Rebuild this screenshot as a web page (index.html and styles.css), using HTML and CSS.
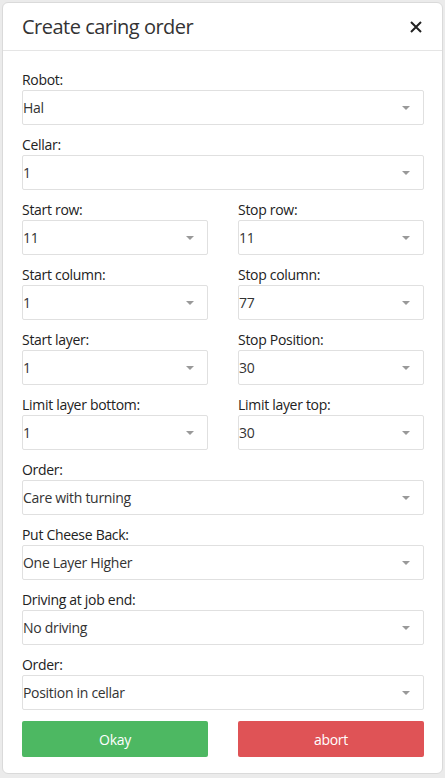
FILE: index.html
```html
<!DOCTYPE html>
<html>
<head>
<meta charset="utf-8">
<link rel="stylesheet" href="styles.css">
</head>
<body>
<div class="modal">
  <div class="modal-header">
    <h4 class="title">Create caring order</h4>
    <span class="close" aria-label="close">
      <svg width="12" height="12" viewBox="0 0 12 12"><path d="M1 1L11 11M11 1L1 11" stroke="#222" stroke-width="2" stroke-linecap="butt"/></svg>
    </span>
  </div>
  <div class="modal-body">
    <div class="group">
      <label>Robot:</label>
      <div class="select"><span>Hal</span><i class="caret"></i></div>
    </div>
    <div class="group">
      <label>Cellar:</label>
      <div class="select"><span>1</span><i class="caret"></i></div>
    </div>
    <div class="row">
      <div class="group">
        <label>Start row:</label>
        <div class="select"><span>11</span><i class="caret"></i></div>
      </div>
      <div class="group">
        <label>Stop row:</label>
        <div class="select"><span>11</span><i class="caret"></i></div>
      </div>
    </div>
    <div class="row">
      <div class="group">
        <label>Start column:</label>
        <div class="select"><span>1</span><i class="caret"></i></div>
      </div>
      <div class="group">
        <label>Stop column:</label>
        <div class="select"><span>77</span><i class="caret"></i></div>
      </div>
    </div>
    <div class="row">
      <div class="group">
        <label>Start layer:</label>
        <div class="select"><span>1</span><i class="caret"></i></div>
      </div>
      <div class="group">
        <label>Stop Position:</label>
        <div class="select"><span>30</span><i class="caret"></i></div>
      </div>
    </div>
    <div class="row">
      <div class="group">
        <label>Limit layer bottom:</label>
        <div class="select"><span>1</span><i class="caret"></i></div>
      </div>
      <div class="group">
        <label>Limit layer top:</label>
        <div class="select"><span>30</span><i class="caret"></i></div>
      </div>
    </div>
    <div class="group">
      <label>Order:</label>
      <div class="select"><span>Care with turning</span><i class="caret"></i></div>
    </div>
    <div class="group">
      <label>Put Cheese Back:</label>
      <div class="select"><span>One Layer Higher</span><i class="caret"></i></div>
    </div>
    <div class="group">
      <label>Driving at job end:</label>
      <div class="select"><span>No driving</span><i class="caret"></i></div>
    </div>
    <div class="group last">
      <label>Order:</label>
      <div class="select"><span>Position in cellar</span><i class="caret"></i></div>
    </div>
    <div class="row buttons">
      <button class="btn btn-ok">Okay</button>
      <button class="btn btn-abort">abort</button>
    </div>
  </div>
</div>
</body>
</html>
```
FILE: styles.css
```css
html, body {
  margin: 0;
  padding: 0;
  background: #ebebeb;
  font-family: "Open Sans", "Noto Sans", sans-serif;
  font-size: 14px;
  color: #222;
}
.modal {
  margin: 2px;
  background: #fff;
  border: 1px solid #dadada;
  border-radius: 6px;
  height: 772px;
  box-sizing: border-box;
}
.modal-header {
  height: 48px;
  box-sizing: border-box;
  border-bottom: 1px solid #e5e5e5;
  display: flex;
  align-items: center;
  justify-content: space-between;
  padding: 0 20px 0 19px;
}
.title {
  margin: 0;
  font-size: 20px;
  font-weight: normal;
  color: #333;
  letter-spacing: -0.5px;
}
.close {
  display: flex;
}
.modal-body {
  padding: 19px 18px 0 19px;
}
.group {
  margin-bottom: 10px;
}
.group.last {
  margin-bottom: 11px;
}
.group label {
  display: block;
  height: 20px;
  line-height: 20px;
  color: #222;
  letter-spacing: -0.3px;
}
.select {
  height: 35px;
  box-sizing: border-box;
  border: 1px solid #e0e0e0;
  border-radius: 2px;
  display: flex;
  align-items: center;
  justify-content: space-between;
  padding: 0 13px 0 0;
  color: #333;
  letter-spacing: -0.3px;
}
.caret {
  width: 0;
  height: 0;
  border-left: 4px solid transparent;
  border-right: 4px solid transparent;
  border-top: 4px solid #999;
}
.row {
  display: grid;
  grid-template-columns: 1fr 1fr;
  column-gap: 30px;
}
.btn {
  height: 36px;
  border: none;
  border-radius: 2px;
  color: #fff;
  font-family: inherit;
  font-size: 14px;
  letter-spacing: -0.3px;
}
.btn-ok {
  background: #4db862;
}
.btn-abort {
  background: #df5356;
}
```
